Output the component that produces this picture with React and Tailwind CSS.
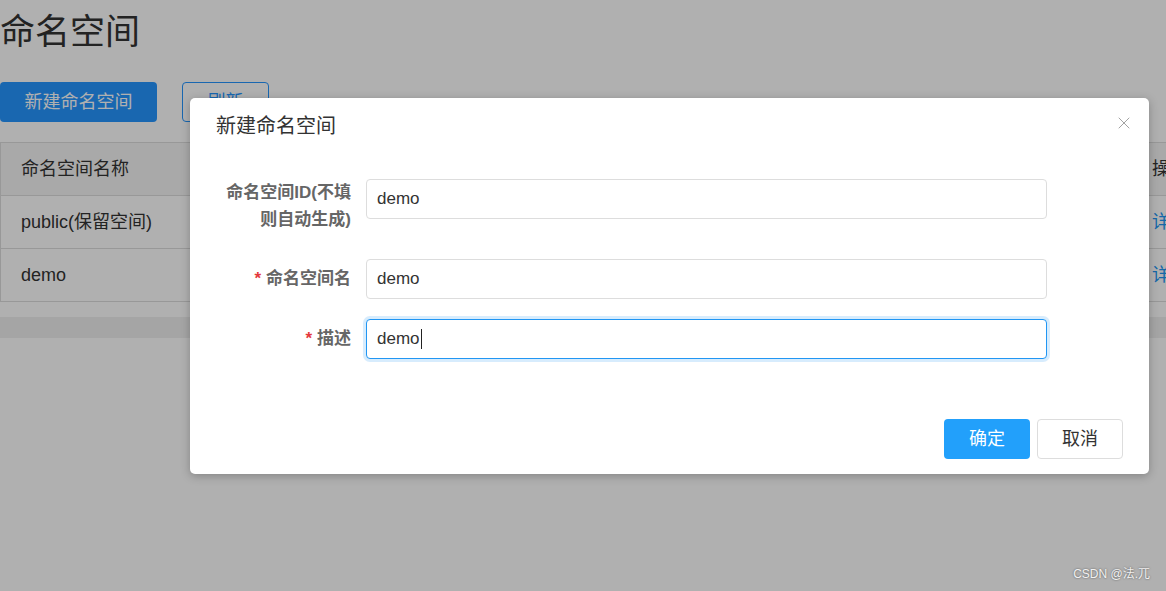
import { X } from "lucide-react";

const font = { fontFamily: '"Liberation Sans", "Noto Sans CJK SC", sans-serif' };

const rows = [
  { name: "public(保留空间)", id: "", count: "0" },
  { name: "demo", id: "demo", count: "0" },
];

function Table() {
  return (
    <div className="w-[1260px]">
      <div className="border border-[#dddddd]">
        <div className="flex h-[52px] items-center bg-[#f5f5f5] text-[18px] text-[#333]">
          <div className="w-[300px] pl-[20px]">命名空间名称</div>
          <div className="w-[300px] pl-[20px]">命名空间ID</div>
          <div className="w-[300px] pl-[20px]">配置数</div>
          <div className="w-[249px]" />
          <div className="pl-[2px]">操作</div>
        </div>
        {rows.map((r) => (
          <div
            key={r.name}
            className="flex h-[53px] items-center border-t border-[#dddddd] bg-white text-[18px] text-[#333]"
          >
            <div className="w-[300px] pl-[20px]">{r.name}</div>
            <div className="w-[300px] pl-[20px]">{r.id}</div>
            <div className="w-[300px] pl-[20px]">{r.count}</div>
            <div className="w-[249px]" />
            <div className="pl-[2px] text-[#2196f3]">详情</div>
          </div>
        ))}
      </div>
      <div className="mt-[15px] h-[21px] w-full bg-[#f0f0f0]" />
    </div>
  );
}

function Field({ label, required, value, focused, twoLine }) {
  return (
    <div className={"flex " + (twoLine ? "items-start" : "items-center")}>
      <div
        className={
          "w-[176px] shrink-0 pl-[26px] pr-[15px] text-right text-[17px] font-bold text-[#666] " +
          (twoLine ? "pb-[6px] leading-[27px]" : "leading-[40px]")
        }
      >
        {required && <span className="mr-[5px] text-[#e4393c]">*</span>}
        {label}
      </div>
      <div
        className={
          "flex h-[40px] w-[681px] items-center rounded-[4px] border bg-white px-[10px] text-[17px] text-[#333] " +
          (focused
            ? "border-[#2196f3] shadow-[0_0_0_3px_rgba(33,150,243,0.18)]"
            : "border-[#dddddd]")
        }
      >
        {value}
        {focused && <span className="ml-[1px] inline-block h-[20px] w-px bg-[#222]" />}
      </div>
    </div>
  );
}

function Modal() {
  return (
    <div className="absolute left-[190px] top-[98px] w-[959px] rounded-[5px] bg-white shadow-[0_2px_10px_rgba(0,0,0,0.25)]">
      <div className="relative flex h-[56px] items-center pl-[26px] text-[20px] text-[#333]">
        新建命名空间
        <X
          className="absolute right-[15px] top-[15px] text-[#999]"
          size={20}
          strokeWidth={1.1}
        />
      </div>
      <div className="flex flex-col gap-[20px] pt-[25px]">
        <Field label="命名空间ID(不填则自动生成)" value="demo" twoLine />
        <Field label="命名空间名" value="demo" required />
        <Field label="描述" value="demo" required focused />
      </div>
      <div className="flex justify-end gap-[7px] pb-[15px] pr-[26px] pt-[60px]">
        <button className="h-[40px] w-[86px] rounded-[4px] bg-[#22a0fb] text-[18px] text-white">
          确定
        </button>
        <button className="h-[40px] w-[86px] rounded-[4px] border border-[#dddddd] bg-white text-[18px] text-[#333]">
          取消
        </button>
      </div>
    </div>
  );
}

export default function App() {
  return (
    <div className="relative h-[591px] w-[1166px] overflow-hidden bg-white" style={font}>
      <div className="pt-[9px]">
        <h1 className="text-[35px] leading-[46px] text-[#333]">命名空间</h1>
        <div className="mt-[27px] flex gap-[25px]">
          <button className="h-[40px] w-[157px] rounded-[4px] bg-[#2596ff] text-[18px] text-white">
            新建命名空间
          </button>
          <button className="h-[40px] w-[87px] rounded-[4px] border border-[#2596ff] bg-white text-[18px] text-[#2596ff]">
            刷新
          </button>
        </div>
        <div className="mt-[20px]">
          <Table />
        </div>
      </div>

      <div className="absolute inset-0 bg-black/[0.31]" />
      <Modal />

      <div className="absolute bottom-[8px] right-[16px] text-[12px] text-white/90 [text-shadow:0_0_2px_rgba(0,0,0,0.6)]">
        CSDN @法.兀
      </div>
    </div>
  );
}
